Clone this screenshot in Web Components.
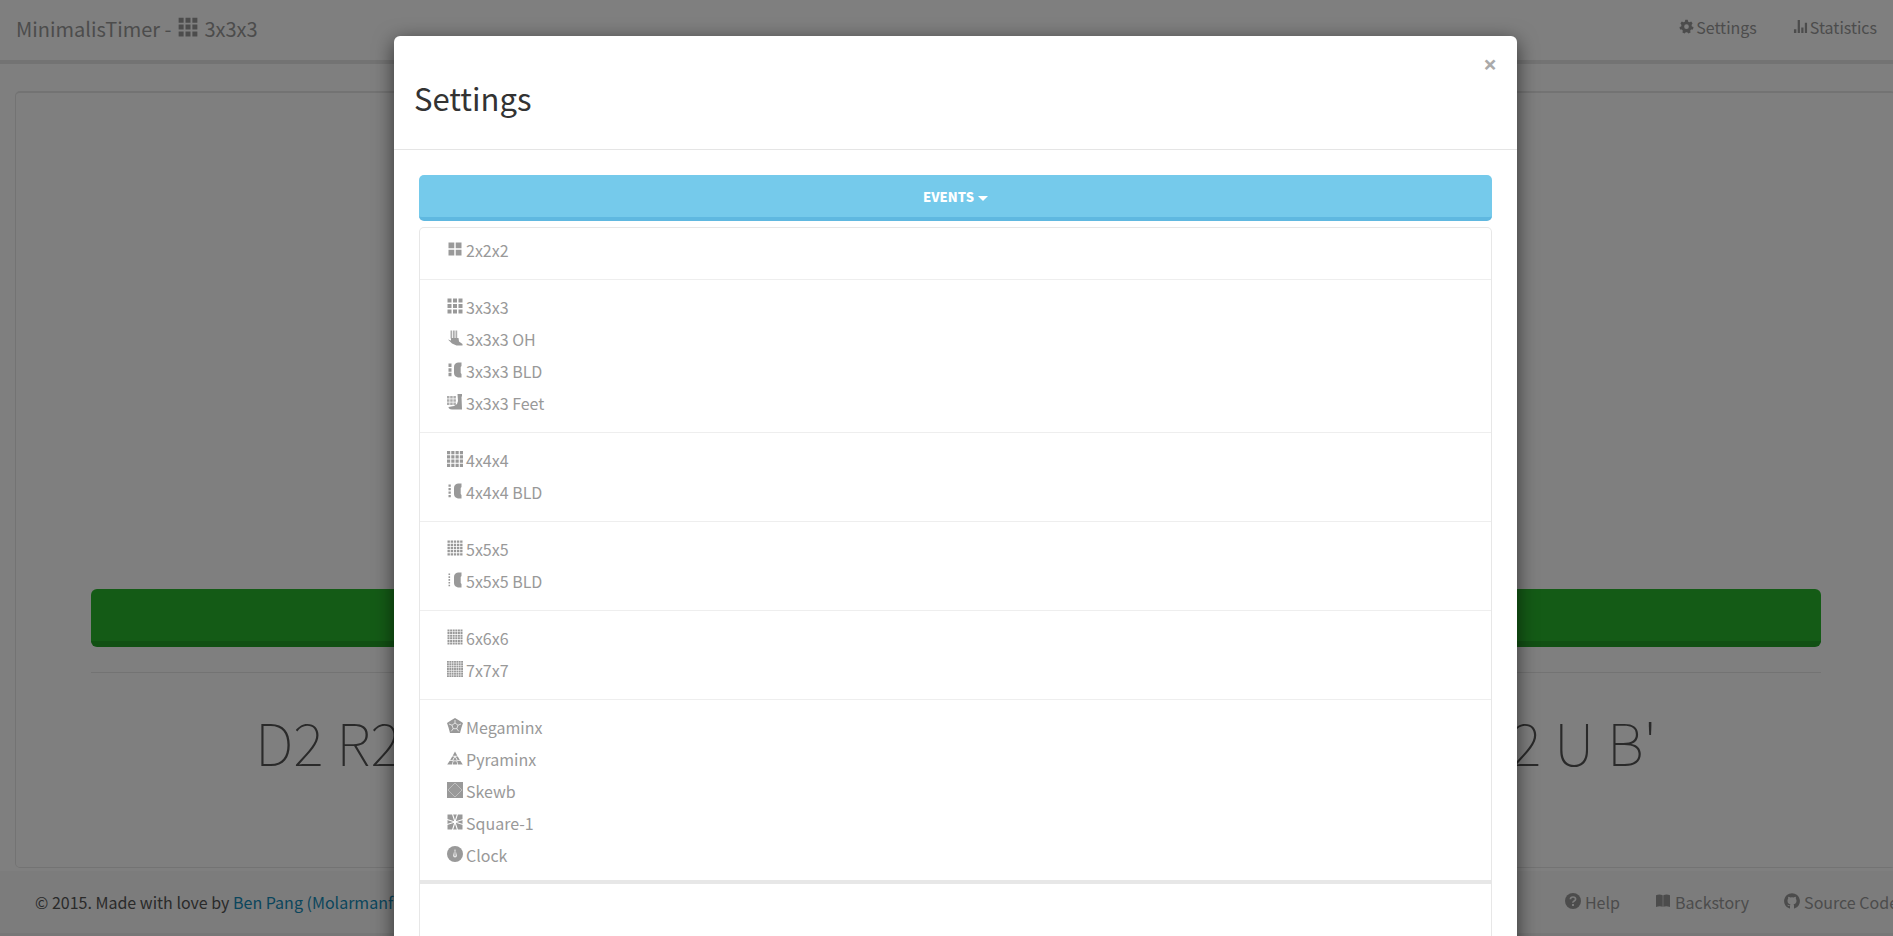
<!DOCTYPE html>
<html lang="en">
<head>
<meta charset="utf-8">
<title>MinimalisTimer</title>
<style>
  html, body {
    height: 100%;
    margin: 0;
    overflow: hidden;
  }

  body {
    background: #fff;
    color: #555;
    font: 16px/24px "Noto Sans CJK SC", "Open Sans", sans-serif;
  }
</style>
</head>
<body>
<timer-app></timer-app>

<script>
// n x n grid of squares inside the 16px icon box
function grid(n, size, gap) {
  const start = (16 - size) / 2;
  const cell = (size - gap * (n - 1)) / n;
  let d = '';
  for (let y = 0; y < n; y++) {
    for (let x = 0; x < n; x++) {
      d += `M${start + x * (cell + gap)} ${start + y * (cell + gap)}h${cell}v${cell}h${-cell}z`;
    }
  }
  return `<path d="${d}"/>`;
}

// blindfolded events: a column of stickers beside a mask
function blind(n) {
  const step = 14 / n;
  let d = '';
  for (let i = 0; i < n; i++) {
    const s = step - 1.2;
    d += `M1.5 ${1.5 + i * step}h${Math.min(s, 3)}v${s}h${-Math.min(s, 3)}z`;
  }
  return `<path d="${d}"/><path d="M11 .5h3.500v3.500l-.8 1v6l.8 1v3.500H11Q7 14.500 7 11V5Q7 1 11 .5z"/>`;
}

const ICONS = {
  cube2: grid(2, 13, 1.4),
  cube3: grid(3, 15, 1.5),
  cube4: grid(4, 16, 1.1),
  cube5: grid(5, 15, 0.8),
  cube6: grid(6, 15, 0.6),
  cube7: grid(7, 16, 0.5),
  blind3: blind(3),
  blind4: blind(4),
  blind5: blind(5),
  hand: `<path d="M3.500.5h1.700v8H3.500zM6 .5h1.700v8H6zM8.500.5h1.700v8H8.500z" opacity=".8"/>
    <path d="M1 9.500l3 1V8h7.500l.5 3.500 3.500 2.500v1.500h-6L5 13.500z"/>`,
  foot: `<path d="M0 2h2.500v2.500H0zM3.200 2h2.500v2.500H3.200zM6.400 2h2.500v2.500H6.400zM0 5.200h2.500v2.500H0zM3.200 5.200h2.500v2.500H3.200zM6.400 5.200h2.500v2.500H6.400zM0 8.400h2.500v2.500H0zM3.200 8.400h2.500v2.500H3.200zM6.400 8.400h2.500v2.500H6.400z" opacity=".8"/>
    <path d="M10.500 0H15v2.500h-.5L15 15.500H5q-3.500-.5-3.500-2.500L7 12l3-2 1-3z"/>`,
  megaminx: `<path d="M8 0l3.800 2.200L16 5l-1.500 4.500L13 15H3L1.500 9.500 0 5l4.200-2.800z"/>
    <path d="M8 5l3 2.200-1.200 3.500H6.200L5 7.200zM8 5V2M11 7.200l3-1.200M9.800 10.700l1.900 2.600M6.200 10.700l-1.900 2.600M5 7.200L2 6" fill="none" stroke="#fff" stroke-width=".7"/>`,
  pyraminx: `<path d="M8 1.500l2.300 4.300H5.700zM5.200 6.500h2.200L5.400 10H3.200zM10.800 6.500H8.600l2 3.500h2.200zM8 7l2 3.500H6zM2.700 10.700h3.200L5 14.500H.2zM13.300 10.700h-3.200l.9 3.800h4.800zM6.500 11.200h3l.8 3.300H5.700z"/>`,
  skewb: `<path d="M0 0h16v16H0z"/>
    <path d="M8 1l7 7-7 7-7-7z" fill="none" stroke="#fff" stroke-width=".6" opacity=".6"/>`,
  square1: `<path d="M.5.5h15v15H.5z"/>
    <path d="M0 5.500l16 5M5.500 0l5 16M10.500 0l-5 16M0 10.500l16-5" stroke="#fff" stroke-width="1.100"/>`,
  clock: `<circle cx="8" cy="8" r="8"/>
    <path d="M8 2.500l2 7q0 2-2 2t-2-2z" fill="#fff" opacity=".75"/><path d="M8 5v5" stroke="currentColor" stroke-width="1"/>`,
  cog: `<path fill-rule="evenodd" d="M6.700.8h2.600l.5 2 1.300.6 1.900-.8 1.500 2-1.100 1.700.3 1.700 1.800.6-.6 2.500-2 .1-1 1.300.5 1.900-2.300 1.100L8.700 14H7.300l-1.400 1.500-2.300-1.100.5-1.900-1-1.300-2-.1-.6-2.500L2.300 8l.3-1.700-1.100-1.700 1.500-2 1.900.8 1.300-.6zM8 5.700a2.500 2.500 0 100 5 2.500 2.500 0 000-5z"/>`,
  stats: `<path d="M1 11h2.600v4H1zM5 1h2.400v14H5zM8.800 9h2.400v6H8.800zM12.600 4H15v11h-2.400z"/>`,
  help: `<circle cx="8" cy="8" r="8"/>
    <path d="M5.400 6.300Q5.500 4 8 4t2.600 2.100q0 1.200-1.400 2T8 9.800" fill="none" stroke="#f8f8f8" stroke-width="1.700"/><path d="M7 11h2v2H7z" fill="#f8f8f8"/>`,
  book: `<path d="M1 2.200Q4.500.8 7.700 2.300v11.400Q4.500 12.700 1 14zM15 2.200Q11.500.8 8.300 2.300v11.400q3.200-1 6.700.3z"/>`,
  github: `<path d="M8 .2A7.900 7.900 0 005.500 15.600c.4.100.5-.2.500-.4v-2.200c-2 .4-2.600-.8-2.700-1.200.9 0 1.400 1 2.700.6.100-.6.300-.9.500-1.100-1.900-.3-3-1.200-3-3.600 0-.9.200-1.500.7-2-.1-.6-.2-1.200.1-2 .8 0 1.500.4 2 .8a7 7 0 013.400 0c.6-.4 1.200-.8 2-.8.300.8.300 1.400.1 2 .5.500.7 1.200.7 2 0 2.400-1.200 3.300-3 3.600.4.300.5.800.5 1.500v2.400c0 .2.100.5.500.4A7.900 7.900 0 008 .2z"/>`
};

class EventIcon extends HTMLElement {
  connectedCallback() {
    this.attachShadow({ mode: 'open' });
    this.shadowRoot.innerHTML = `
      <style>
        :host {
          display: inline-block;
          line-height: 0;
        }

        svg {
          width: var(--icon-size, 16px);
          height: var(--icon-size, 16px);
          fill: currentColor;
        }
      </style>
      <svg viewBox="0 0 16 16" aria-hidden="true">${ICONS[this.getAttribute('name')]}</svg>
    `;
  }
}

class IconLink extends HTMLElement {
  connectedCallback() {
    this.attachShadow({ mode: 'open' });
    this.shadowRoot.innerHTML = `
      <style>
        :host {
          display: block;
        }

        a {
          display: flex;
          align-items: baseline;
          gap: var(--icon-gap, 4px);
          color: #999;
          text-decoration: none;
          white-space: nowrap;
        }

        a:hover {
          color: #333;
        }
      </style>
      <a href="#"><event-icon name="${this.getAttribute('icon')}"></event-icon><span><slot></slot></span></a>
    `;
  }
}

class TimerNavbar extends HTMLElement {
  connectedCallback() {
    this.attachShadow({ mode: 'open' });
    this.shadowRoot.innerHTML = `
      <style>
        :host {
          display: block;
        }

        nav {
          display: flex;
          justify-content: space-between;
          align-items: flex-start;
          height: 60px;
          padding: 0 34px 0 16px;
          background: #fff;
          border-bottom: 4px solid #e7e7e7;
        }

        .brand {
          --icon-size: 20px;
          color: #999;
          font-size: 20px;
          line-height: 57px;
          text-decoration: none;
        }

        .brand event-icon {
          margin: 0 2px;
        }

        .links {
          --icon-gap: 2px;
          --icon-size: 15px;
          display: flex;
          gap: 36px;
          line-height: 54px;
        }
      </style>
      <nav>
        <a class="brand" href="#">MinimalisTimer - <event-icon name="cube3"></event-icon> 3x3x3</a>
        <div class="links">
          <icon-link icon="cog">Settings</icon-link>
          <icon-link icon="stats">Statistics</icon-link>
        </div>
      </nav>
    `;
  }
}

class TimerPanel extends HTMLElement {
  connectedCallback() {
    this.attachShadow({ mode: 'open' });
    this.shadowRoot.innerHTML = `
      <style>
        :host {
          display: flex;
          flex-direction: column;
          flex: 1;
          margin: 27px 15px 3px;
        }

        section {
          display: flex;
          flex-direction: column;
          justify-content: flex-end;
          flex: 1;
          padding: 0 74px 78px 75px;
          border: 1px solid #e7e7e7;
          border-top-width: 2px;
          border-radius: 5px;
        }

        button {
          height: 58px;
          border: 0 solid #23a127;
          border-bottom-width: 6px;
          border-radius: 6px;
          background: #28b62c;
        }

        hr {
          width: 100%;
          margin: 25px 0 20px;
          border: 0;
          border-top: 1px solid #e7e7e7;
        }

        .scramble {
          display: flex;
          justify-content: space-between;
          padding: 0 164px;
          color: #555;
          font-size: 58px;
          font-weight: 100;
          line-height: 96px;
          white-space: nowrap;
        }
      </style>
      <section>
        <button type="button" aria-label="Start timer"></button>
        <hr>
        <div class="scramble"><slot></slot></div>
      </section>
    `;
  }
}

class TimerFooter extends HTMLElement {
  connectedCallback() {
    this.attachShadow({ mode: 'open' });
    this.shadowRoot.innerHTML = `
      <style>
        :host {
          display: block;
        }

        footer {
          display: flex;
          justify-content: space-between;
          padding: 0 13px 0 35px;
          background: #f8f8f8;
          border-bottom: 3px solid #eee;
          line-height: 62px;
        }

        a {
          color: #158cba;
          text-decoration: none;
        }

        .links {
          display: flex;
          gap: 35px;
        }
      </style>
      <footer>
        <span>© 2015. Made with love by <a href="#">Ben Pang (Molarmanful)</a></span>
        <div class="links">
          <icon-link icon="help">Help</icon-link>
          <icon-link icon="book">Backstory</icon-link>
          <icon-link icon="github">Source Code</icon-link>
        </div>
      </footer>
    `;
  }
}

class SettingsModal extends HTMLElement {
  connectedCallback() {
    this.attachShadow({ mode: 'open' });
    this.shadowRoot.innerHTML = `
      <style>
        :host {
          position: absolute;
          inset: 0;
          overflow: hidden;
          background: rgba(0, 0, 0, 0.5);
        }

        .dialog {
          max-width: 1123px;
          min-height: 100%;
          margin: 36px auto 0;
          border-radius: 6px;
          background: #fff;
          box-shadow: 0 5px 20px rgba(0, 0, 0, 0.6);
        }

        header {
          display: flex;
          flex-direction: row-reverse;
          justify-content: space-between;
          align-items: flex-start;
          padding: 15px 20px 16px;
          border-bottom: 1px solid #e5e5e5;
        }

        h2 {
          margin: 22px 0 10px;
          color: #333;
          font-size: 31px;
          font-weight: 400;
          line-height: 50px;
        }

        .close {
          padding: 0;
          border: 0;
          background: none;
          color: #aaa;
          font: 700 24px/26px "Open Sans", sans-serif;
        }

        .body {
          padding: 25px;
        }
      </style>
      <div class="dialog" role="dialog" aria-label="Settings">
        <header>
          <button class="close" type="button" aria-label="Close">×</button>
          <h2>Settings</h2>
        </header>
        <div class="body"><slot></slot></div>
      </div>
    `;
  }
}

class EventsDropdown extends HTMLElement {
  connectedCallback() {
    this.attachShadow({ mode: 'open' });
    this.shadowRoot.innerHTML = `
      <style>
        :host {
          display: block;
        }

        button {
          display: flex;
          justify-content: center;
          align-items: center;
          gap: 4px;
          width: 100%;
          height: 46px;
          padding: 2px 0 0;
          border: 0 solid #5fb8e0;
          border-bottom-width: 4px;
          border-radius: 5px;
          background: #75caeb;
          color: #fff;
          font: 900 13px/20px "Noto Sans CJK SC", sans-serif;
        }

        .caret {
          margin-top: 2px;
          border: 5px solid transparent;
          border-top-color: #fff;
          border-bottom: 0;
        }

        .menu {
          margin-top: 6px;
          padding: 6px 0 9px;
          border: 1px solid #e7e7e7;
          border-bottom: 4px solid #e7e7e7;
          border-radius: 5px 5px 0 0;
        }

        .well {
          height: 120px;
          border: solid #e7e7e7;
          border-width: 0 1px;
        }
      </style>
      <button type="button" aria-expanded="true">EVENTS <span class="caret"></span></button>
      <div class="menu"><slot></slot></div>
      <div class="well"></div>
    `;
  }
}

class EventGroup extends HTMLElement {
  connectedCallback() {
    this.attachShadow({ mode: 'open' });
    this.shadowRoot.innerHTML = `
      <style>
        :host {
          display: block;
          padding: 11px 27px 13px;
          border-top: 1px solid #eee;
          line-height: 32px;
          --icon-gap: 3px;
        }

        :host(:first-child) {
          padding-top: 0;
          border-top: 0;
        }

        :host(:last-child) {
          padding-bottom: 0;
        }
      </style>
      <slot></slot>
    `;
  }
}

class TimerApp extends HTMLElement {
  connectedCallback() {
    this.attachShadow({ mode: 'open' });
    this.shadowRoot.innerHTML = `
      <style>
        /* the page runs on under the space of the scrollbar */
        :host {
          position: relative;
          display: flex;
          flex-direction: column;
          width: calc(100% + 18px);
          height: 100%;
        }
      </style>
      <timer-navbar></timer-navbar>
      <timer-panel><span>D2 R2</span><span>F2 U B'</span></timer-panel>
      <timer-footer></timer-footer>
      <settings-modal>
        <events-dropdown>
          <event-group>
            <icon-link icon="cube2">2x2x2</icon-link>
          </event-group>
          <event-group>
            <icon-link icon="cube3">3x3x3</icon-link>
            <icon-link icon="hand">3x3x3 OH</icon-link>
            <icon-link icon="blind3">3x3x3 BLD</icon-link>
            <icon-link icon="foot">3x3x3 Feet</icon-link>
          </event-group>
          <event-group>
            <icon-link icon="cube4">4x4x4</icon-link>
            <icon-link icon="blind4">4x4x4 BLD</icon-link>
          </event-group>
          <event-group>
            <icon-link icon="cube5">5x5x5</icon-link>
            <icon-link icon="blind5">5x5x5 BLD</icon-link>
          </event-group>
          <event-group>
            <icon-link icon="cube6">6x6x6</icon-link>
            <icon-link icon="cube7">7x7x7</icon-link>
          </event-group>
          <event-group>
            <icon-link icon="megaminx">Megaminx</icon-link>
            <icon-link icon="pyraminx">Pyraminx</icon-link>
            <icon-link icon="skewb">Skewb</icon-link>
            <icon-link icon="square1">Square-1</icon-link>
            <icon-link icon="clock">Clock</icon-link>
          </event-group>
        </events-dropdown>
      </settings-modal>
    `;
  }
}

customElements.define('event-icon', EventIcon);
customElements.define('icon-link', IconLink);
customElements.define('timer-navbar', TimerNavbar);
customElements.define('timer-panel', TimerPanel);
customElements.define('timer-footer', TimerFooter);
customElements.define('settings-modal', SettingsModal);
customElements.define('events-dropdown', EventsDropdown);
customElements.define('event-group', EventGroup);
customElements.define('timer-app', TimerApp);
</script>
</body>
</html>
